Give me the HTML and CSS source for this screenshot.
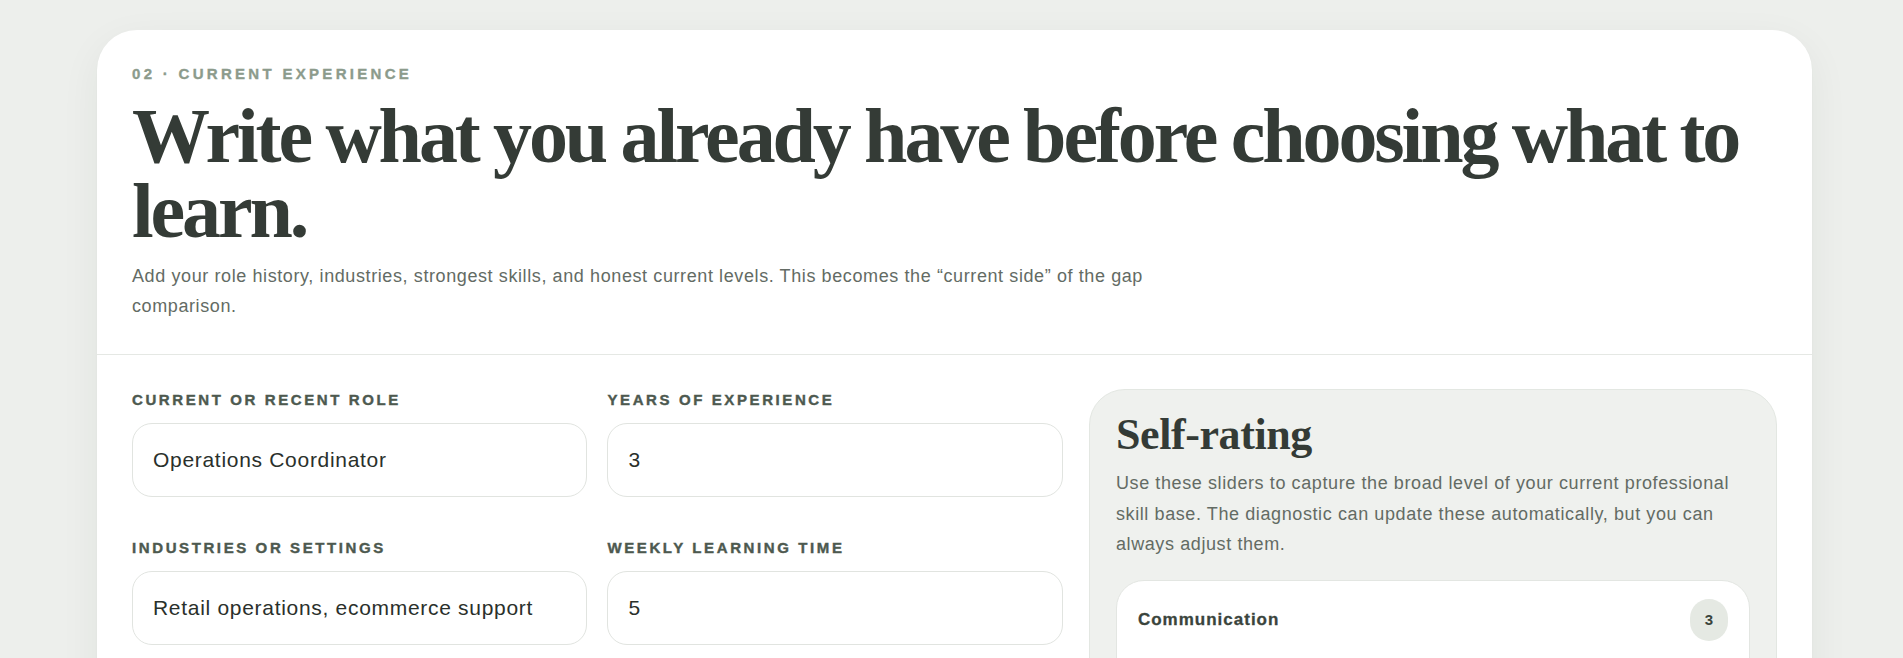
FILE: index.html
```html
<!DOCTYPE html>
<html lang="en">
<head>
<meta charset="utf-8">
<title>Current experience</title>
<link rel="stylesheet" href="styles.css">
</head>
<body>
<main class="page">
  <section class="card">
    <header class="card-head">
      <p class="eyebrow">02 · Current experience</p>
      <h1 class="title">Write what you already have before choosing what to learn.</h1>
      <p class="lede">Add your role history, industries, strongest skills, and honest current levels. This becomes the “current side” of the gap comparison.</p>
    </header>
    <div class="card-body">
      <div class="form-grid">
        <label class="field">
          <span class="field-label">Current or recent role</span>
          <input class="input" type="text" value="Operations Coordinator">
        </label>
        <label class="field">
          <span class="field-label">Years of experience</span>
          <input class="input" type="text" value="3">
        </label>
        <label class="field">
          <span class="field-label">Industries or settings</span>
          <input class="input" type="text" value="Retail operations, ecommerce support">
        </label>
        <label class="field">
          <span class="field-label">Weekly learning time</span>
          <input class="input" type="text" value="5">
        </label>
      </div>
      <aside class="panel">
        <h2 class="panel-title">Self-rating</h2>
        <p class="panel-text">Use these sliders to capture the broad level of your current professional skill base. The diagnostic can update these automatically, but you can always adjust them.</p>
        <div class="rating">
          <div class="rating-head">
            <span class="rating-name">Communication</span>
            <span class="rating-badge">3</span>
          </div>
          <input class="rating-range" type="range" min="1" max="5" value="3">
        </div>
      </aside>
    </div>
  </section>
</main>
</body>
</html>
```
FILE: styles.css
```css
* { box-sizing: border-box; }

html, body {
  margin: 0;
  padding: 0;
}

body {
  background: #edefec;
  font-family: "Liberation Sans", Arial, sans-serif;
  color: #2e3530;
}

.page {
  padding: 30px 91px 40px 97px;
}

.card {
  background: #ffffff;
  border-radius: 40px;
  box-shadow: 0 12px 40px rgba(40, 52, 42, 0.06), 0 1px 2px rgba(40, 52, 42, 0.04);
  overflow: hidden;
}

.card-head {
  padding: 34px 35px 33px;
  border-bottom: 1px solid #e5e8e4;
}

.eyebrow {
  margin: 0;
  font-size: 15px;
  line-height: 20px;
  font-weight: 700;
  letter-spacing: 3.3px;
  text-transform: uppercase;
  color: #8c9b8c;
  -webkit-text-stroke: 0.35px currentColor;
}

.title {
  margin: 14px 0 0;
  font-family: "Liberation Serif", "Times New Roman", serif;
  font-weight: 700;
  font-size: 78px;
  line-height: 75px;
  letter-spacing: -3.1px;
  word-spacing: -1px;
  color: #343b36;
}

.lede {
  margin: 13px 0 0;
  max-width: 1070px;
  font-size: 18px;
  line-height: 30px;
  letter-spacing: 0.6px;
  color: #636b64;
}

.card-body {
  display: grid;
  grid-template-columns: minmax(0, 1.353fr) minmax(0, 1fr);
  column-gap: 26px;
  align-items: start;
  padding: 34px 35px 40px;
}

.form-grid {
  display: grid;
  grid-template-columns: 1fr 1fr;
  column-gap: 20px;
  row-gap: 40px;
}

.field {
  display: flex;
  flex-direction: column;
}

.field-label {
  font-size: 15px;
  line-height: 21px;
  font-weight: 700;
  letter-spacing: 2.6px;
  text-transform: uppercase;
  color: #4d594f;
  margin-bottom: 13px;
  -webkit-text-stroke: 0.4px currentColor;
}

.input {
  height: 74px;
  width: 100%;
  padding: 0 20px;
  border: 1px solid #e1e4e0;
  border-radius: 20px;
  background: #ffffff;
  font-family: "Liberation Sans", Arial, sans-serif;
  font-size: 21px;
  letter-spacing: 0.7px;
  color: #2a302b;
  outline: none;
}

.panel {
  background: #eff1ee;
  border: 1px solid #e3e7e2;
  border-radius: 36px;
  padding: 22px 26px 26px;
}

.panel-title {
  margin: 0;
  font-family: "Liberation Serif", "Times New Roman", serif;
  font-weight: 700;
  font-size: 44px;
  line-height: 46px;
  letter-spacing: -0.4px;
  color: #343b36;
}

.panel-text {
  margin: 10px 0 0;
  font-size: 18px;
  line-height: 30.5px;
  letter-spacing: 0.6px;
  color: #636b64;
}

.rating {
  margin-top: 20px;
  background: #ffffff;
  border: 1px solid #e3e6e2;
  border-radius: 28px;
  padding: 18px 21px 24px;
}

.rating-head {
  display: flex;
  align-items: center;
  justify-content: space-between;
}

.rating-name {
  font-size: 17px;
  font-weight: 700;
  letter-spacing: 1px;
  color: #3a443c;
  -webkit-text-stroke: 0.3px currentColor;
}

.rating-badge {
  display: flex;
  align-items: center;
  justify-content: center;
  width: 38px;
  height: 42px;
  border-radius: 999px;
  background: #e5e9e3;
  font-size: 15px;
  font-weight: 700;
  color: #3a443c;
}

.rating-range {
  width: 100%;
  margin-top: 18px;
  accent-color: #4d594f;
}
```
